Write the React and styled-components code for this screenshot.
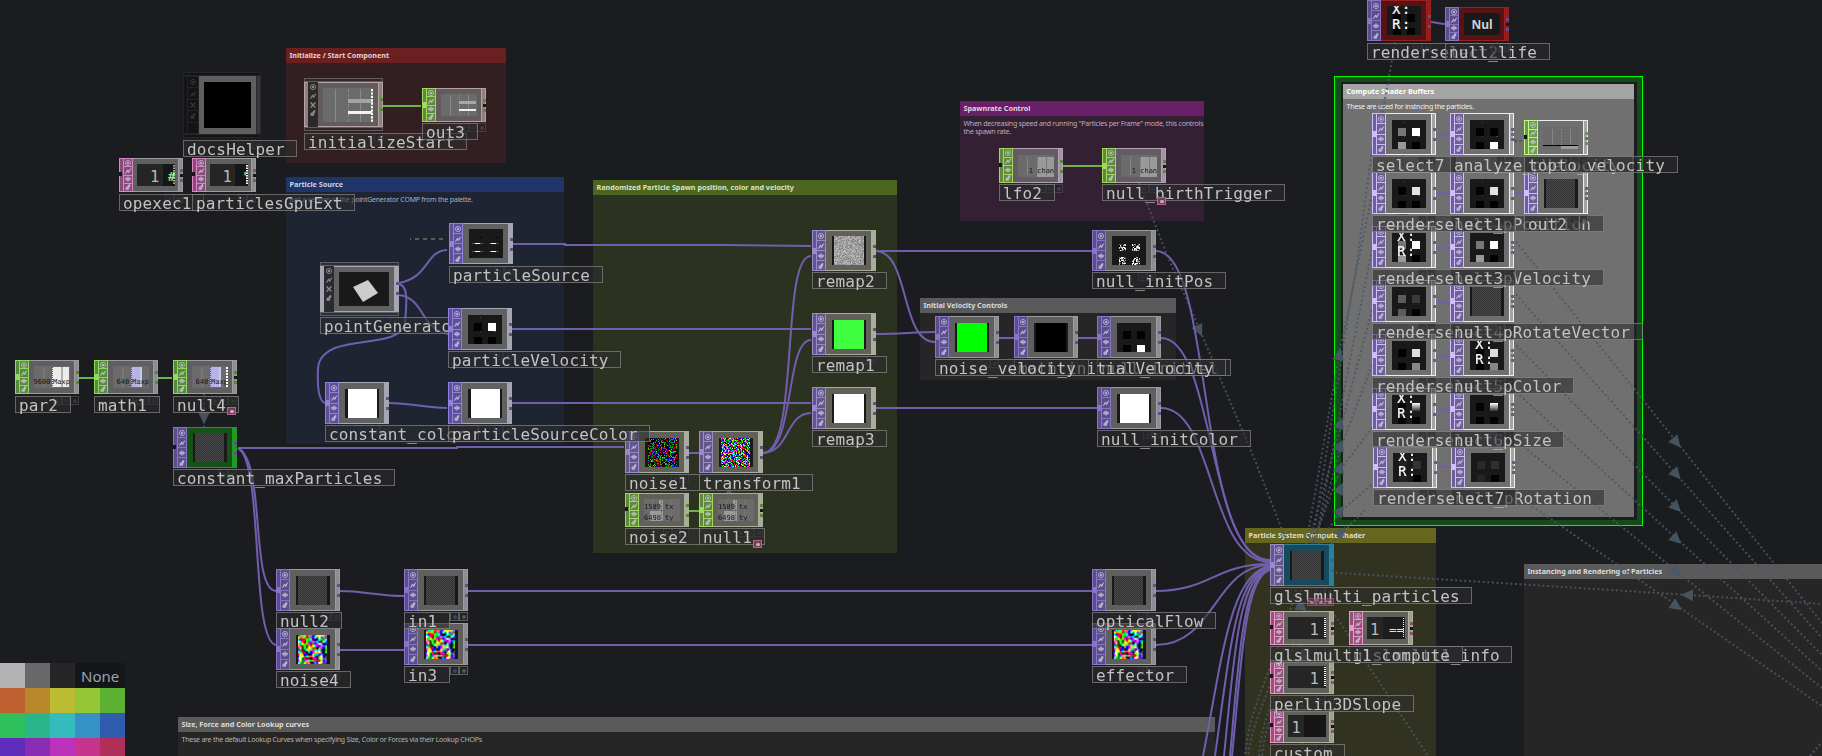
import React from "react";
import styled, { createGlobalStyle } from "styled-components";

const Global = createGlobalStyle`
  html, body { margin: 0; background: #1b1c20; overflow: hidden; }
  * { box-sizing: border-box; }
`;

const MONO = '"DejaVu Sans Mono", monospace';
const SANS = '"Noto Sans", "Open Sans", sans-serif';

/* ---------- colour sets ---------- */
const FRAMES = {
  plain: { edge: "#9c9c9f", body: "#5f5f5f", side: "#8e8e92", comp: "#232323" },
  blue: { edge: "#a4a7b2", body: "#616163", side: "#a4a7b2", comp: "#2b2e38" },
  red: { edge: "#b3a3a4", body: "#635c5c", side: "#8f7f7f", comp: "#322828" },
  olive: { edge: "#a9ad9b", body: "#616159", side: "#a9ad9b", comp: "#222" },
  violet: { edge: "#b3a2b3", body: "#635c63", side: "#a394a3", comp: "#222" },
  bright: { edge: "#eeeeee", body: "#6f6f6f", side: "#a4a4a4", comp: "#222" },
  yellow: { edge: "#b2b2a0", body: "#62625c", side: "#a0a08c", comp: "#222" },
  green: { edge: "#1f9a22", body: "#165217", side: "#1f9a22", comp: "#222" },
  crimson: { edge: "#99201f", body: "#571314", side: "#941d1d", comp: "#222" },
  cyan: { edge: "#32809b", body: "#174a5e", side: "#27809c", comp: "#222" },
};
const FAMILIES = {
  top: { light: "#8775c6", dark: "#5c4d8c", peg: "#5f4f8e" },
  topBlue: { light: "#8f80dc", dark: "#5d5098", peg: "#5f508e" },
  topOlive: { light: "#9a8acb", dark: "#63568b", peg: "#5f508e" },
  topBright: { light: "#cfbefc", dark: "#6e5f98", peg: "#6c5b92" },
  chop: { light: "#8fd960", dark: "#578a3b", peg: "#4f8a37" },
  chopTint: { light: "#a0d860", dark: "#5f8a3c", peg: "#5a8a37" },
  chopBright: { light: "#c4f78c", dark: "#6d9c4b", peg: "#6b9a47" },
  dat: { light: "#da85c5", dark: "#8a4a7b", peg: "#8a4f78" },
  datTint: { light: "#ee98c6", dark: "#96507c", peg: "#8a4f78" },
};

/* ---------- canvas and network boxes ---------- */
const Canvas = styled.main`
  position: relative;
  width: 1822px;
  height: 756px;
  overflow: hidden;
  background: #1b1c20;
`;
const Wires = styled.svg`
  position: absolute;
  inset: 0;
  width: 1822px;
  height: 756px;
  pointer-events: none;
`;
const Selection = styled.div`
  position: absolute;
  left: 1334px;
  top: 76px;
  width: 309px;
  height: 450px;
  border: 1px solid #00ff00;
  background: #144c19;
  padding: 5px 5px 5px 6px;
  &::before {
    content: "";
    display: block;
    height: 100%;
    background: #1b1c20;
  }
`;
const Box = styled.section`
  position: absolute;
  left: ${(p) => p.$x}px;
  top: ${(p) => p.$y}px;
  width: ${(p) => p.$w}px;
  height: ${(p) => p.$h}px;
  background: ${(p) => p.$body};
  font-family: ${SANS};
`;
const BoxTitle = styled.h2`
  margin: 0;
  height: 15px;
  padding-left: 3.5px;
  background: ${(p) => p.$head};
  color: ${(p) => p.$ink || "#dcdcdc"};
  font-size: 7.2px;
  font-weight: 700;
  line-height: 15px;
  white-space: nowrap;
`;
const BoxText = styled.p`
  margin: 3.5px 0 0 3.5px;
  color: ${(p) => p.$ink || "#b4b4b4"};
  font-size: 7px;
  letter-spacing: -0.23px;
  line-height: 8.9px;
  white-space: pre;
`;

/* ---------- operator nodes ---------- */
const NodeFrame = styled.div`
  position: absolute;
  left: ${(p) => p.$x}px;
  top: ${(p) => p.$y}px;
  width: ${(p) => p.$w}px;
  height: ${(p) => p.$h}px;
  display: flex;
  flex-direction: column;
`;
const CompBar = styled.div`
  flex: 0 0 ${(p) => p.$h || 4}px;
  border: 1px solid ${(p) => p.$edge};
  background: ${(p) => p.$c};
`;
const NodeRow = styled.div`
  flex: 1;
  min-height: 0;
  display: flex;
  background: ${(p) => p.$f.body};
`;
const Inputs = styled.div`
  position: relative;
  flex: 0 0 4px;
  background: ${(p) => p.$fam.dark};
  border: 1px solid ${(p) => p.$fam.light};
  border-right: 0;
`;
const InPeg = styled.i`
  position: absolute;
  left: -1px;
  top: ${(p) => p.$t}px;
  width: ${(p) => (p.$open ? 3 : 4)}px;
  height: ${(p) => (p.$open ? 4 : 6)}px;
  background: ${(p) => (p.$open ? "#17171a" : p.$fam.light)};
`;
const Buttons = styled.div`
  flex: 0 0 ${(p) => p.$w}px;
  display: flex;
  flex-direction: column;
  gap: 1px;
  padding: 1px;
  background: ${(p) => p.$fam.light};
`;
const Button = styled.span`
  flex: 1;
  min-height: 0;
  display: flex;
  align-items: center;
  justify-content: center;
  background: ${(p) => p.$fam.dark};
  svg { display: block; width: 8px; height: 8px; }
`;
const Face = styled.div`
  flex: 1;
  display: flex;
  align-items: center;
  justify-content: center;
  border-top: 1px solid ${(p) => p.$f.edge};
  border-bottom: 1px solid ${(p) => p.$f.edge};
  svg { display: block; }
`;
const Outputs = styled.div`
  position: relative;
  flex: 0 0 5px;
  border: 1px solid ${(p) => p.$f.edge};
  background: ${(p) => p.$f.side};
`;
const OutPeg = styled.i`
  position: absolute;
  right: -1px;
  top: ${(p) => p.$t}px;
  width: 3px;
  height: 3px;
  background: ${(p) => p.$c};
`;
const Notch = styled.i`
  position: absolute;
  right: -1px;
  top: ${(p) => p.$t}px;
  width: 3px;
  height: 3px;
  background: ${(p) => p.$c};
`;
const Label = styled.div`
  position: absolute;
  left: ${(p) => p.$x}px;
  top: ${(p) => p.$y}px;
  height: 17px;
  width: ${(p) => p.$n * 9.78 + 16.6}px;
  padding-left: 3px;
  border: 1px solid rgba(170, 170, 170, 0.5);
  background: rgba(44, 45, 46, 0.58);
  color: #c3c3c3;
  font: 16px/17.6px ${MONO};
  letter-spacing: 0.15px;
  white-space: pre;
`;
const Flags = styled.div`
  position: absolute;
  left: ${(p) => p.$x}px;
  top: ${(p) => p.$y}px;
  width: ${(p) => p.$w}px;
  height: 9px;
  display: flex;
  opacity: ${(p) => (p.$strong ? 1 : 0.55)};
`;
const Flag = styled.span`
  flex: 1;
  display: flex;
  align-items: center;
  justify-content: center;
  border: 1px solid #5c5c5c;
  background: #222426;
  &::after {
    content: "";
    width: 4px;
    height: 4px;
    border-radius: 2px;
    background: ${(p) => p.$c};
  }
`;
const InfoFlag = styled.span`
  position: absolute;
  left: ${(p) => p.$x}px;
  top: ${(p) => p.$y}px;
  width: 9px;
  height: 8px;
  display: flex;
  align-items: center;
  justify-content: center;
  border: 1px solid #b9648f;
  background: #70405c;
  opacity: ${(p) => p.$o || 1};
  &::after {
    content: "";
    width: 4px;
    height: 3px;
    border-radius: 2px;
    background: #d6a5c3;
  }
`;

/* ---------- palette ---------- */
const Palette = styled.div`
  position: absolute;
  left: 0;
  top: 663px;
  display: grid;
  grid-template-columns: repeat(5, 25px);
  grid-auto-rows: 25px;
`;
const Swatch = styled.span`
  background: ${(p) => p.$c};
`;
const NoneSwatch = styled.span`
  grid-column: span 2;
  background: #151617;
  color: #98a1b3;
  font: 15px/26px ${SANS};
  padding-left: 6px;
  white-space: nowrap;
`;

/* ---------- viewer pictures ---------- */
const rand = (seed) => {
  let s = seed * 9301 + 49297;
  return () => {
    s = (s * 1664525 + 1013904223) % 4294967296;
    return s / 4294967296;
  };
};
function Pixels({ x = 0, y = 0, w, h, paint }) {
  const out = [];
  for (let j = 0; j < h; j++)
    for (let i = 0; i < w; i++)
      out.push(<rect key={j * w + i} x={x + i} y={y + j} width="1" height="1" fill={paint(i, j)} />);
  return <g shapeRendering="crispEdges">{out}</g>;
}
const clamp = (v) => Math.max(0, Math.min(255, Math.round(v)));
function smoothPaint(seed) {
  const r = rand(seed);
  const N = 18;
  const grid = [0, 1, 2].map(() => Array.from({ length: N * N }, () => r()));
  return (i, j) => {
    const u = i / 2.1, v = j / 2.1;
    const a = Math.floor(u), b = Math.floor(v), fu = u - a, fv = v - b;
    const ch = grid.map((g) => {
      const t = g[b * N + a] * (1 - fu) + g[b * N + a + 1] * fu;
      const q = g[(b + 1) * N + a] * (1 - fu) + g[(b + 1) * N + a + 1] * fu;
      return clamp(((t * (1 - fv) + q * fv - 0.5) * 2.3 + 0.52) * 255);
    });
    return `rgb(${ch.join(",")})`;
  };
}
function dotPaint(seed, gain, cut) {
  const r = rand(seed);
  return () => {
    const c = () => {
      const v = r();
      return v < cut ? 0 : clamp(v * gain);
    };
    return `rgb(${c()},${c()},${c()})`;
  };
}
function grayPaint(seed, lo, hi) {
  const r = rand(seed);
  return () => {
    const v = clamp(lo + r() * (hi - lo));
    return `rgb(${v},${v},${v})`;
  };
}
const PX = {
  smooth: () => <Pixels x={2} w={29} h={29} paint={smoothPaint(7)} />,
  dark: () => <Pixels x={3} w={29} h={29} paint={dotPaint(3, 190, 0.72)} />,
  vivid: () => <Pixels x={2} w={29} h={29} paint={dotPaint(5, 290, 0.55)} />,
  gray: () => <Pixels x={2} w={30} h={29} paint={grayPaint(9, 125, 195)} />,
  checker: () => <Pixels x={2} w={29} h={29} paint={(i, j) => ((i + j) % 2 ? "#343434" : "#474747")} />,
};
const XR = () => (
  <g fill="#fff" fontFamily="DejaVu Sans Mono" fontSize="13.5" letterSpacing="1.6" stroke="#fff" strokeWidth="0.2">
    <text x="5.3" y="7.6">X:</text>
    <text x="5.3" y="22.6">R:</text>
  </g>
);
const Squares = ({ c, sparks }) => (
  <>
    {[[6, 8], [20, 8], [6, 22], [20, 22]].map(([x, y], i) => (
      <rect key={i} x={x} y={y} width="7.5" height={i < 2 ? 8 : 7} fill={c[i]} />
    ))}
    {sparks && <path d="M12 2h1v1h-1zM26 16h2v1h-2zM12 16h1v1h-1z" fill="#0a7a0a" />}
  </>
);
const Fill = ({ c, x = 2 }) => <rect x={x} width={x === 2 ? 30 : 29} height="29" fill={c} />;

function TopView({ kind, sq, xr, fill, fx }) {
  return (
    <svg width="34" height="29" shapeRendering="crispEdges">
      <rect width="34" height="29" fill="#191919" />
      {PX[kind] && PX[kind]()}
      {fill && <Fill c={fill} x={fx} />}
      {sq && <Squares c={sq} sparks={kind === "sparks"} />}
      {kind === "lines" && (
        <>
          <path d="M3 14.5h11M20 14.5h9M3 22.5h11M20 22.5h9" stroke="#5b5b5b" />
          <path d="M6 14.5h5M22 14.5h5M6 22.5h5M22 22.5h5" stroke="#fff" />
          <path d="M10 8.5h3M26 8.5h3" stroke="#050505" />
        </>
      )}
      {kind === "patches" &&
        [[7, 8], [20, 8], [7, 21], [20, 21]].map(([x, y], i) => (
          <Pixels key={i} x={x} y={y} w={i % 2 ? 8 : 7} h={i < 2 ? 7 : 8} paint={grayPaint(20 + i * 77, -60, 310)} />
        ))}
      {xr && <XR />}
    </svg>
  );
}
const T = (props) => (
  <text fontFamily="DejaVu Sans Mono" fontSize="7" fill="#161616" {...props} />
);
function ChopView({ kind }) {
  return (
    <svg width="36" height="22">
      <rect width="36" height="22" fill="#6b6b6b" />
      {(kind === "par" || kind === "math" || kind === "null4") && (
        <>
          <path d="M10 1v20" stroke="#848484" />
          <rect x="18" y="1" width={kind === "par" ? 17 : 11} height="20" fill={kind === "par" ? "#ececec" : "#b4b4e6"} />
          <path d="M18.5 1v20" stroke="#555" strokeDasharray="1 1" />
          <path d="M28 1v20" stroke={kind === "par" ? "#777" : "#dcdcf4"} />
          <T x={kind === "par" ? -0.5 : 3.5} y="17.5">{kind === "par" ? "9600" : "640"}</T>
          <T x="19" y="17.5">Maxp</T>
          {kind === "null4" && <path d="M35 1v20" stroke="#fff" strokeWidth="2" strokeDasharray="2 1" />}
        </>
      )}
      {kind === "tx" && (
        <>
          <path d="M9 0v22M27 0v22" stroke="#7a7a7a" />
          <path d="M15 1h4v10h-4zM6 12h13v10h-13z" fill="#9a9a9a" />
          <path d="M17.5 0v22" stroke="#777" strokeDasharray="2 1" />
          <T x="0" y="9.6">1589 tx</T>
          <T x="0" y="20.6">6498 ty</T>
        </>
      )}
      {kind === "chan" && (
        <>
          <path d="M9.5 2v18" stroke="#858585" />
          <rect x="19" y="2" width="17" height="20" fill="#9a9a9a" />
          <path d="M19.5 2v18" stroke="#6a6a6a" strokeDasharray="1 1" />
          <path d="M28.5 2v18" stroke="#7b7b7b" />
          <T x="10.8" y="17.5">1 chan</T>
        </>
      )}
      {kind === "out3" && (
        <>
          <path d="M9.5 1v20M27.5 1v20" stroke="#8a8a8a" />
          <path d="M18.5 1v20" stroke="#8a8a8a" strokeDasharray="1 1" />
          <rect x="18" y="7" width="17" height="3" fill="#a8a8a8" />
          <rect x="18" y="15" width="17" height="2" fill="#eee" />
        </>
      )}
      {kind === "top" && (
        <>
          <path d="M9.5 2v16M27.5 2v16" stroke="#858585" />
          <path d="M18.5 2v16" stroke="#858585" strokeDasharray="2 1" />
          <path d="M0 18.5h35" stroke="#000" />
          <rect x="18" y="19" width="17" height="3" fill="#9c9c9c" />
        </>
      )}
    </svg>
  );
}
function DatView({ kind }) {
  const num = (x) => (
    <text x={x} y="17.5" fontFamily="DejaVu Sans Mono" fontSize="15.5" fill="#b9b9b9">1</text>
  );
  return (
    <svg width="38" height="22">
      <rect width="38" height="22" fill="#252525" />
      {(kind === "hash" || kind === "tick") && (
        <>
          <rect x={kind === "hash" ? 26 : 25} width="13" height="22" fill="#161616" />
          {num(kind === "hash" ? 13 : 12.5)}
          <text x={kind === "hash" ? 31 : 31.5} y="17" fontFamily="DejaVu Sans Mono" fontSize="12" fontWeight="700" fill="#86e28c">
            {kind === "hash" ? "#" : "'"}
          </text>
          <path d="M37 1v20" stroke="#fff" strokeWidth={kind === "hash" ? 1.2 : 2} strokeDasharray="1.5 1" />
        </>
      )}
      {kind === "one" && (
        <>
          {num(21.5)}
          <path d="M37 1v20" stroke="#fff" strokeWidth="2" strokeDasharray="1 1" />
        </>
      )}
      {kind === "eq" && (
        <>
          <rect x="16" width="22" height="22" fill="#1d1d1d" />
          {num(3)}
          <text x="22" y="17" fontFamily="DejaVu Sans Mono" fontSize="12.5" fill="#e4e4e4">==</text>
          <path d="M36.5 1v20" stroke="#fff" strokeDasharray="1 1" />
        </>
      )}
      {kind === "left" && (
        <>
          <rect x="16" width="22" height="22" fill="#161616" />
          {num(3.5)}
        </>
      )}
    </svg>
  );
}
function CompView({ kind }) {
  if (kind === "docs")
    return <svg width="47" height="46"><rect width="47" height="46" fill="#000" /></svg>;
  if (kind === "quad")
    return (
      <svg width="50" height="34">
        <rect width="50" height="34" fill="#191919" />
        <path d="M14 15l15-7 10 13-15 9z" fill="#cdcdcd" />
      </svg>
    );
  return (
    <svg width="50" height="34">
      <rect width="50" height="34" fill="#6b6b6b" />
      <path d="M12.5 1v33M37.5 1v33" stroke="#8a8a8a" />
      <path d="M25.5 1v33" stroke="#8a8a8a" strokeDasharray="3 2" />
      <rect x="25" y="11" width="25" height="4" fill="#a4a4a4" />
      <rect x="25" y="23" width="24" height="3" fill="#f2f2f2" />
      <path d="M49 1v33" stroke="#fff" strokeWidth="2" strokeDasharray="2.2 1.2" />
    </svg>
  );
}

/* ---------- button glyphs ---------- */
function Glyph({ i, c, comp }) {
  return (
    <svg viewBox="0 0 8 8">
      {i === 0 && (
        <>
          <circle cx="4" cy="4" r="2.6" fill="none" stroke={c} strokeWidth="0.9" />
          <circle cx="4" cy="4" r="1.3" fill={c} />
        </>
      )}
      {i === 1 && <path d="M1.3 6.6L3.6 2.8L4.2 4.4L6.8 1.6L4.8 5.8L3.8 4.6z" fill={c} stroke={c} strokeWidth="0.7" />}
      {i === 2 && (comp ? (
        <path d="M1.6 1.6l4.8 4.8M6.4 1.6l-4.8 4.8" stroke={c} strokeWidth="1.4" />
      ) : (
        <path d="M1 4h6M4 1.4v5.2M2.6 2.6v2.8M5.4 2.6v2.8" stroke={c} strokeWidth="1.3" />
      ))}
      {i === 3 && (
        <>
          <circle cx="3.3" cy="5.2" r="1.9" fill={c} />
          <path d="M4 4.4V2.2l2-1v2.6z" fill={c} stroke={c} strokeWidth="0.6" />
        </>
      )}
    </svg>
  );
}

/* ---------- node data: labels of later entries lie over earlier ones ---------- */
const B = "#020202";
const NODES = [
  { t: "comp", x: 183, y: 72, w: 78, h: 66, kind: "docs", f: "plain", dim: 1, name: "docsHelper", ly: 140 },
  { t: "comp", x: 304, y: 78, w: 79, h: 53, kind: "init", f: "red", name: "initializeStart", ly: 133, peg: "#5a8a37" },
  { t: "chop", x: 422, y: 88, kind: "out3", f: "red", fam: "chopTint", name: "out3", ly: 123, end: 1 },
  { t: "dat", x: 119, y: 158, kind: "hash", name: "opexec1", ly: 194, start: 1, end: 1 },
  { t: "dat", x: 192, y: 158, kind: "tick", name: "particlesGpuExt", ly: 194, start: 1, end: 1 },
  { t: "chop", x: 15, y: 360, kind: "par", name: "par2", ly: 396 },
  { t: "chop", x: 94, y: 360, kind: "math", name: "math1", ly: 396 },
  { t: "chop", x: 173, y: 360, kind: "null4", name: "null4", ly: 396, end: 1 },
  { t: "top", x: 173, y: 427, h: 41, kind: "checker", f: "green", name: "constant_maxParticles", ly: 469, start: 1 },
  { t: "comp", x: 320, y: 262, w: 79, h: 54, kind: "quad", f: "blue", name: "pointGenerator", ly: 317, under: 1, peg: "#5f508e" },
  { t: "top", x: 449, y: 223, h: 41, kind: "lines", f: "blue", fam: "topBlue", name: "particleSource", ly: 266 },
  { t: "top", x: 448, y: 308, kind: "sparks", sq: [B, "#fff", B, B], f: "blue", fam: "topBlue", name: "particleVelocity", ly: 351 },
  { t: "top", x: 325, y: 382, fill: "#fff", fx: 3, f: "blue", fam: "topBlue", name: "constant_color", ly: 425 },
  { t: "top", x: 448, y: 382, fill: "#fff", fx: 3, f: "blue", fam: "topBlue", name: "particleSourceColor", ly: 425 },
  { t: "top", x: 812, y: 230, h: 41, kind: "gray", f: "olive", fam: "topOlive", name: "remap2", ly: 272 },
  { t: "top", x: 812, y: 313, fill: "#40ff40", f: "olive", fam: "topOlive", name: "remap1", ly: 356 },
  { t: "top", x: 812, y: 387, fill: "#fff", f: "olive", fam: "topOlive", name: "remap3", ly: 430 },
  { t: "top", x: 625, y: 431, kind: "dark", f: "olive", fam: "topOlive", name: "noise1", ly: 474 },
  { t: "top", x: 699, y: 431, kind: "vivid", f: "olive", fam: "topOlive", name: "transform1", ly: 474 },
  { t: "chop", x: 625, y: 493, kind: "tx", f: "olive", fam: "chopTint", name: "noise2", ly: 528, start: 1 },
  { t: "chop", x: 699, y: 493, kind: "tx", f: "olive", fam: "chopTint", name: "null1", ly: 528, end: 1 },
  { t: "chop", x: 999, y: 148, h: 35, kind: "chan", f: "violet", fam: "chopTint", name: "lfo2", ly: 184, start: 1 },
  { t: "chop", x: 1102, y: 148, h: 35, kind: "chan", f: "violet", fam: "chopTint", name: "null_birthTrigger", ly: 184, end: 1 },
  { t: "top", x: 1092, y: 230, h: 41, kind: "patches", name: "null_initPos", ly: 272 },
  { t: "top", x: 1097, y: 316, sq: [B, B, B, "#fff"], name: "null_initVel", ly: 359 },
  { t: "top", x: 1014, y: 316, fill: "#000", name: "math_initialVelocity", ly: 359 },
  { t: "top", x: 935, y: 316, fill: "#00ff00", name: "noise_velocity", ly: 359 },
  { t: "top", x: 1097, y: 387, fill: "#fff", fx: 3, name: "null_initColor", ly: 430 },
  { t: "top", x: 1367, y: 0, h: 41, sq: [B, B, B, B], xr: 1, f: "crimson", name: "renderselect2", ly: 43 },
  { t: "nul", x: 1445, y: 7, f: "crimson", name: "null_life", ly: 43, end: 1 },
  { t: "top", x: 276, y: 569, kind: "checker", name: "null2", ly: 612 },
  { t: "top", x: 276, y: 628, kind: "smooth", name: "noise4", ly: 671 },
  { t: "top", x: 404, y: 569, kind: "checker", name: "in1", ly: 612, strong: 1 },
  { t: "top", x: 404, y: 623, kind: "smooth", name: "in3", ly: 666, strong: 1 },
  { t: "top", x: 1092, y: 569, kind: "checker", name: "opticalFlow", ly: 612 },
  { t: "top", x: 1092, y: 623, kind: "smooth", name: "effector", ly: 666 },
  { t: "top", x: 1372, y: 113, kind: "sparks", sq: ["#777", "#fff", "#999", B], f: "bright", name: "select7", ly: 156 },
  { t: "top", x: 1450, y: 113, kind: "sparks", sq: [B, B, B, "#fff"], f: "bright", name: "analyze_pVelocity", ly: 156, end: 1 },
  { t: "chop", x: 1524, y: 120, h: 35, kind: "top", f: "bright", fam: "chopBright", name: "topto_velocity", ly: 156, start: 1, end: 1 },
  { t: "top", x: 1450, y: 172, kind: "sparks", sq: [B, "#e2e2e2", B, B], f: "bright", name: "null_pPosition", ly: 215 },
  { t: "top", x: 1372, y: 172, kind: "sparks", sq: [B, "#e2e2e2", B, B], f: "bright", name: "renderselect1", ly: 215 },
  { t: "top", x: 1524, y: 172, kind: "checker", f: "bright", name: "out2", ly: 215, end: 1 },
  { t: "top", x: 1450, y: 226, sq: ["#777", "#fff", "#999", B], f: "bright", name: "null_pVelocity", ly: 269, end: 1 },
  { t: "top", x: 1372, y: 226, sq: ["#777", "#fff", "#999", B], xr: 1, f: "bright", name: "renderselect3", ly: 269 },
  { t: "top", x: 1372, y: 280, sq: ["#5c5c5c", "#3a3a3a", "#5c5c5c", B], f: "bright", name: "renderselect4", ly: 323 },
  { t: "top", x: 1450, y: 280, kind: "checker", f: "bright", name: "null_pRotateVector", ly: 323, end: 1 },
  { t: "top", x: 1372, y: 334, sq: [B, "#dcdcdc", B, "#888"], f: "bright", name: "renderselect5", ly: 377 },
  { t: "top", x: 1450, y: 334, sq: [B, "#dcdcdc", B, "#888"], xr: 1, f: "bright", name: "null_pColor", ly: 377, end: 1 },
  { t: "top", x: 1372, y: 388, sq: [B, "url(#fade)", B, B], xr: 1, f: "bright", name: "renderselect6", ly: 431 },
  { t: "top", x: 1450, y: 388, sq: [B, "url(#fade)", B, B], f: "bright", name: "null_pSize", ly: 431, end: 1 },
  { t: "top", x: 1451, y: 446, sq: ["#2a2a2a", "#303030", "#242424", B], f: "bright", name: "null_pRotation", ly: 489, end: 1 },
  { t: "top", x: 1373, y: 446, sq: ["#222", "#333", "#222", B], xr: 1, f: "bright", name: "renderselect7", ly: 489 },
  { t: "top", x: 1270, y: 544, kind: "checker", f: "cyan", fam: "topOlive", name: "glslmulti_particles", ly: 587 },
  { t: "dat", x: 1349, y: 611, kind: "eq", f: "yellow", fam: "datTint", name: "glslmulti1_info", ly: 646, end: 1 },
  { t: "dat", x: 1270, y: 611, kind: "one", f: "yellow", fam: "datTint", name: "glslmulti1_compute", ly: 646, start: 1, end: 1 },
  { t: "dat", x: 1270, y: 660, kind: "one", f: "yellow", fam: "datTint", name: "perlin3DSlope", ly: 695, start: 1, end: 1 },
  { t: "dat", x: 1270, y: 709, kind: "left", f: "yellow", fam: "datTint", name: "custom", ly: 744, start: 1, end: 1 },
];

function Node({ n }) {
  const f = FRAMES[n.f || "plain"];
  if (n.t === "comp") {
    const fam = n.dim
      ? { light: "#222324", dark: "#141415" }
      : { light: f.comp, dark: "#2a2a2c" };
    const bar = { $c: n.dim ? "#131415" : f.comp, $edge: n.dim ? "#252627" : f.body };
    return (
      <NodeFrame $x={n.x} $y={n.y} $w={n.w} $h={n.h}>
        <CompBar {...bar} />
        <NodeRow $f={f}>
          <Inputs $fam={n.dim ? fam : { light: f.edge, dark: f.side }} />
          <Buttons $fam={fam} $w={n.dim ? 12 : 9}>
            {[0, 1, 2, 3, 4].map((i) => (
              <Button key={i} $fam={fam}><Glyph i={i} comp c={n.dim ? "#333" : "#8a8888"} /></Button>
            ))}
          </Buttons>
          <Face $f={n.dim ? { edge: "#5f5f5f" } : f}><CompView kind={n.kind} /></Face>
          <Outputs $f={n.dim ? { edge: "#2c2c2c", side: "#383838" } : f}>
            {n.peg && <><OutPeg $t={15} $c={n.peg} /><OutPeg $t={25} $c={n.peg} /></>}
          </Outputs>
        </NodeRow>
        <CompBar {...bar} />
      </NodeFrame>
    );
  }
  const isTop = n.t === "top";
  const h = n.h || (isTop ? 42 : 34);
  const famKey = n.fam || (n.t === "nul" || isTop ? (n.f === "bright" ? "topBright" : "top") : n.t);
  const fam = FAMILIES[famKey];
  const mid = Math.round(h / 2) - 4;
  return (
    <NodeFrame $x={n.x} $y={n.y} $w={64} $h={h}>
      <NodeRow $f={f}>
        <Inputs $fam={fam}><InPeg $t={mid} $fam={fam} $open={n.start} /></Inputs>
        <Buttons $fam={fam} $w={isTop ? 10 : 8}>
          {[0, 1, 2, 3].map((i) => (
            <Button key={i} $fam={fam}><Glyph i={i} c="rgba(205,200,220,.75)" /></Button>
          ))}
        </Buttons>
        <Face $f={f}>
          {isTop && <TopView {...n} />}
          {n.t === "chop" && <ChopView kind={n.kind} />}
          {n.t === "dat" && <DatView kind={n.kind} />}
          {n.t === "nul" && (
            <svg width="36" height="22">
              <rect width="36" height="22" fill="#191919" />
              <text x="7.5" y="16" fontFamily="Noto Sans" fontWeight="700" fontSize="12" fill="#d0d0d0">Nul</text>
            </svg>
          )}
        </Face>
        <Outputs $f={f}>
          <OutPeg $t={Math.round(h / 2 - 7)} $c={fam.peg} />
          <OutPeg $t={Math.round(h / 2 + 3)} $c={fam.peg} />
          {n.end && <Notch $t={Math.round(h / 2 - 2)} $c={n.f === "bright" ? "#707070" : "#17171a"} />}
        </Outputs>
      </NodeRow>
    </NodeFrame>
  );
}
function NodeLabel({ n }) {
  const w = n.w || 64;
  const three = n.t === "chop";
  const fw = three ? 26 : n.t === "comp" ? 9 : 18;
  return (
    <>
      <Flags $x={n.x + w - fw} $y={n.ly} $w={fw} $strong={n.strong}>
        {three && <Flag $c="#46603a" />}
        {fw > 10 && <Flag $c="#2c4a78" />}
        <Flag $c="#555" />
      </Flags>
      <Label $x={n.x} $y={n.ly} $n={n.name.length}>{n.name}</Label>
    </>
  );
}

/* ---------- connections ---------- */
const PURPLE = [
  "M513 244H565V245H724L811 246", "M512 329H811", "M512 403H811",
  "M399 283C430 277 425 251 447 250",
  "M399 295C425 298 420 330 449 334",
  "M399 284C408 286 407 300 405 323C400 345 360 338 335 348C314 357 318 370 318 385C319 398 322 403 326 403",
  "M389 403C412 403 425 408 447 408",
  "M238 448H457V447H624",
  "M238 448C266 462 250 590 276 591", "M238 448C264 462 250 640 276 645",
  "M340 591C365 591 378 596 404 596", "M467 591H1092", "M340 650H404", "M467 645H1092",
  "M876 251H1092", "M876 251C910 252 900 342 935 342", "M876 334C900 334 915 332 935 332",
  "M876 408H1097", "M689 453H699",
  "M763 453C800 452 780 256 811 256", "M763 453C795 452 785 340 811 340", "M763 453C790 452 785 414 811 413",
  "M998 338H1014", "M1078 338H1097",
  "M1156 251C1215 251 1195 560 1270 560", "M1161 338C1215 338 1208 561 1270 561", "M1161 408C1215 408 1208 562 1270 562",
  "M1156 591C1210 591 1215 564 1270 564", "M1156 645C1215 645 1215 565 1270 565",
  "M1203 756C1222 660 1230 572 1270 566", "M1215 756C1230 650 1236 572 1270 567",
  "M1224 756C1234 660 1238 574 1270 568", "M1230 756C1238 670 1242 574 1270 569",
  "M1232 756C1241 670 1244 576 1270 570",
  "M1430 22C1437 22 1438 24 1446 24", "M1435 134H1450", "M1435 193H1450", "M1514 193H1524",
  "M1435 248H1450", "M1435 302H1450", "M1435 356H1450", "M1435 410H1450", "M1436 467H1451",
];
const GREEN = ["M79 378H94", "M158 378H172", "M382 106H421", "M689 511H699", "M1062 166H1102"];
const DOTTED = [
  "M204 389V428",
  "M1137 178L1167 255L1199 328L1254 458L1288 545",
  "M1396 38L1383 110L1372 150L1357 262L1337 385L1312 545",
  "M1372 195L1340 350L1306 545", "M1403 150V212", "M1372 250L1348 370L1315 545",
  "M1372 310L1340 430L1308 545", "M1372 365L1340 450L1314 545",
  "M1378 420L1340 470L1312 545", "M1392 467L1340 512L1318 545", "M1365 510L1330 545",
  "M1513 238L1822 623", "M1513 291L1822 638", "M1513 342L1822 655", "M1513 389L1676 538L1822 671",
  "M1513 438L1676 571L1822 688", "M1494 480L1676 605L1822 706",
  "M1322 572L1500 583L1690 595L1822 604", "M1810 756L1822 742",
  "M1335 615L1428 756", "M1302 590V756",
  "M1296 590C1275 670 1250 700 1245 756", "M1300 595C1282 670 1254 710 1248 756",
  "M1305 610C1285 680 1262 710 1259 756", "M1310 610C1292 680 1266 712 1262 756",
  "M1510 141H1524", "M1494 205L1500 235",
];
const ARROWS = [
  [204, 417, 180], [1199, 330, 155], [1676, 442, 141], [1676, 474, 139], [1676, 507, 136], [1676, 539, 133],
  [1676, 572, 130], [1676, 606, 125], [1688, 595, -87], [1339, 355, 10], [1340, 424, 20], [1340, 446, 20],
  [1340, 468, 20], [1340, 489, 25], [1340, 511, 35], [1341, 532, 40], [1301, 605, 5], [1303, 655, 0], [1403, 210, 0],
  [1511, 141, 90], [729, 494, 0],
];

const SWATCHES = [
  "#be6030", "#b8892c", "#bcbc32", "#94c636", "#5cb032",
  "#2fc05c", "#2ab68a", "#34bcbc", "#3692c6", "#305cb0",
  "#602cbc", "#8a2cb4", "#bc32bc", "#c6348e", "#b02e5a",
];

export default function App() {
  return (
    <Canvas>
      <Global />
      <Box $x={286} $y={48} $w={220} $h={115} $body="#331f21">
        <BoxTitle $head="#6a2020" $ink="#e6d2d2">Initialize / Start Component</BoxTitle>
      </Box>
      <Box $x={286} $y={177} $w={278} $h={267} $body="#1f2432">
        <BoxTitle $head="#1f3567" $ink="#ccd4e4">Particle Source</BoxTitle>
        <BoxText $ink="#a8afc0">Just a version of the pointGenerator COMP from the palette.</BoxText>
      </Box>
      <Box $x={593} $y={180} $w={304} $h={373} $body="#2c3220">
        <BoxTitle $head="#4d661f" $ink="#dbe2cc">Randomized Particle Spawn position, color and velocity</BoxTitle>
      </Box>
      <Box $x={960} $y={101} $w={244} $h={120} $body="#332033">
        <BoxTitle $head="#681f68" $ink="#e6d2e6">Spawnrate Control</BoxTitle>
        <BoxText $ink="#bfacbf">{'When decreasing speed and running "Particles per Frame" mode, this controls\nthe spawn rate.'}</BoxText>
      </Box>
      <Box $x={920} $y={298} $w={256} $h={82} $body="#262626">
        <BoxTitle $head="#5a5a5a">Initial Velocity Controls</BoxTitle>
      </Box>
      <Box $x={178} $y={717} $w={1037} $h={60} $body="#262626">
        <BoxTitle $head="#5a5a5a">Size, Force and Color Lookup curves</BoxTitle>
        <BoxText>These are the default Lookup Curves when specifying Size, Color or Forces via their Lookup CHOPs</BoxText>
      </Box>
      <Box $x={1524} $y={564} $w={320} $h={220} $body="#262626">
        <BoxTitle $head="#5a5a5a">Instancing and Rendering of Particles</BoxTitle>
      </Box>
      <Box $x={1245} $y={528} $w={191} $h={260} $body="#323220">
        <BoxTitle $head="#66661f" $ink="#deded0">Particle System Compute Shader</BoxTitle>
      </Box>
      <Selection />
      <Box $x={1343} $y={84} $w={291} $h={433} $body="#707070">
        <BoxTitle $head="#a4a4a4" $ink="#ffffff">Compute Shader Buffers</BoxTitle>
        <BoxText $ink="#f0f0f0">These are used for instncing the particles.</BoxText>
      </Box>

      <Wires>
        <defs>
          <linearGradient id="fade" x1="0" y1="0" x2="0" y2="1">
            <stop offset="0" stopColor="#fff" />
            <stop offset="1" stopColor="#333" />
          </linearGradient>
        </defs>
        <g fill="none" stroke="#4a5967" strokeWidth="2" strokeDasharray="2 2.6" opacity="0.85">
          {DOTTED.map((d) => <path key={d} d={d} />)}
        </g>
        <g fill="#4a5967" opacity="0.9">
          {ARROWS.map(([x, y, r]) => (
            <path key={`${x}-${y}`} d="M0 -7L6 5H-6z" transform={`translate(${x} ${y}) rotate(${r})`} />
          ))}
        </g>
        <path d="M410 239H444" stroke="#4b6656" strokeWidth="2" strokeDasharray="4 4" strokeDashoffset="3" />
        <g fill="none" stroke="#715ead" strokeWidth="2">
          {PURPLE.map((d) => <path key={d} d={d} />)}
        </g>
        <g fill="none" stroke="#70b248" strokeWidth="2">
          {GREEN.map((d) => <path key={d} d={d} />)}
        </g>
      </Wires>

      {NODES.filter((n) => n.under).map((n) => <NodeLabel key={n.name} n={n} />)}
      {NODES.map((n) => <Node key={`${n.x}-${n.y}`} n={n} />)}
      {NODES.filter((n) => !n.under).map((n) => <NodeLabel key={`${n.x}-${n.ly}`} n={n} />)}
      <InfoFlag $x={227} $y={407} />
      <InfoFlag $x={753} $y={540} />
      <InfoFlag $x={1157} $y={197} />
      <InfoFlag $x={1307} $y={598} $o={0.6} />
      <InfoFlag $x={1316} $y={598} $o={0.6} />
      <InfoFlag $x={1325} $y={598} $o={0.6} />

      <Palette>
        <Swatch $c="#b2b2b2" />
        <Swatch $c="#686868" />
        <Swatch $c="#262626" />
        <NoneSwatch>None</NoneSwatch>
        {SWATCHES.map((c) => <Swatch key={c} $c={c} />)}
      </Palette>
    </Canvas>
  );
}
